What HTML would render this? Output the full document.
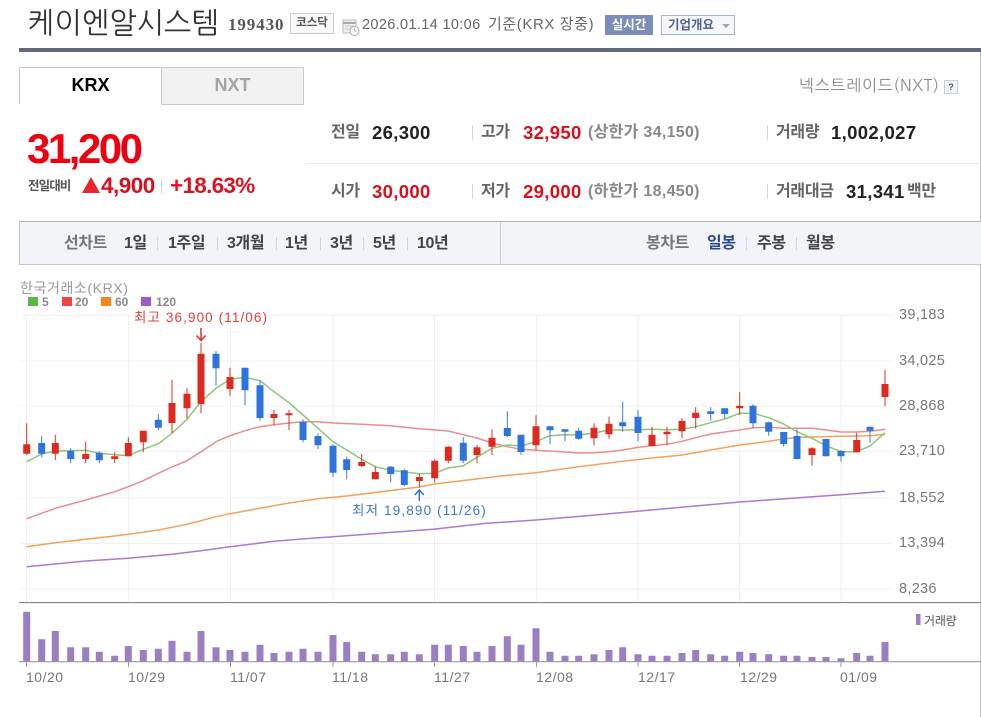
<!DOCTYPE html>
<html lang="ko"><head><meta charset="utf-8"><title>케이엔알시스템</title>
<style>
html,body{margin:0;padding:0;background:#fff;width:981px;height:717px;overflow:hidden}
body{position:relative;font-family:"Liberation Sans","Noto Sans CJK KR",sans-serif;color:#333}
.t{position:absolute;white-space:nowrap;line-height:20px;height:20px;filter:blur(.3px)}
.b{font-weight:700}
.l{font-size:16px;font-weight:700;color:#666;letter-spacing:-.3px}
.v{font-size:18.5px;font-weight:700;color:#222;letter-spacing:.35px}
.r{color:#d9101b}
.g{font-size:16px;font-weight:700;color:#888;letter-spacing:.3px}
.bar{position:absolute;width:1px;background:#d5d5d5}
.x{font-size:14px;color:#777;letter-spacing:.5px}
.y{font-size:14.5px;color:#777;letter-spacing:.3px;left:899px}
.tb{font-size:16px;font-weight:700;color:#444;letter-spacing:-.4px}
.sb{position:absolute;top:237px;width:1px;height:13px;background:#d4d6dc}
svg{position:absolute;left:0;top:0}
</style></head><body>

<div class="t" style="left:27px;top:9px;height:30px;line-height:30px;font-family:'NanumGothic','Noto Sans CJK KR',sans-serif;font-size:29px;letter-spacing:.15px;color:#333">케이엔알시스템</div>
<div class="t b" style="left:228px;top:15px;font-family:'Liberation Serif',serif;font-size:17px;letter-spacing:.9px;color:#555">199430</div>
<div style="position:absolute;left:290px;top:13px;width:42px;height:19px;border:1px solid #ccc;background:#fafafa;text-align:center;font-size:11.5px;line-height:19px;color:#555;font-weight:700">코스닥</div>
<svg width="981" height="40" style="pointer-events:none"><path d="M343 20h13v13h-13z" fill="#eee" stroke="#bbb"/><path d="M343 23h13" stroke="#aaa" stroke-width="2"/><path d="M345 26h9M345 29h5" stroke="#ccc"/><circle cx="354.500" cy="31" r="4.500" fill="#fff" stroke="#aaa"/><path d="M354.500 28.500V31h2" fill="none" stroke="#aaa"/></svg>
<div class="t" style="left:362px;top:15px;font-size:14.5px;color:#666;letter-spacing:.35px">2026.01.14 10:06</div>
<div class="t" style="left:488px;top:15px;font-size:15px;color:#666;letter-spacing:.6px">기준(KRX 장중)</div>
<div style="position:absolute;left:605px;top:15px;width:48px;height:20px;background:#7b8db8;color:#fff;text-align:center;font-size:12.5px;line-height:20px;font-weight:700">실시간</div>
<div style="position:absolute;left:661px;top:15px;width:72px;height:18px;border:1px solid #a5b2d0;background:#f5f7fd;color:#4f6295;font-size:12.5px;line-height:18px;font-weight:700"><span style="position:absolute;left:6px;white-space:nowrap">기업개요</span><span style="position:absolute;left:60px;top:8px;border:4px solid transparent;border-top:4px solid #9aa6c4;border-bottom:0"></span></div>
<div style="position:absolute;left:19px;top:48px;width:962px;height:4px;background:#626a76"></div>
<div style="position:absolute;left:980px;top:52px;width:1px;height:665px;background:#c4c4c4"></div>

<div style="position:absolute;left:19px;top:67px;width:141px;height:36px;border:1px solid #c8c8c8;border-bottom:0;text-align:center;font:700 18px/35px 'Liberation Sans',sans-serif;color:#000;background:#fff">KRX</div>
<div style="position:absolute;left:161px;top:67px;width:141px;height:36px;border:1px solid #c8c8c8;text-align:center;font:700 18px/35px 'Liberation Sans',sans-serif;color:#a5a5a5;background:#f2f2f2">NXT</div>
<div class="t" style="left:799px;top:76px;font-size:16px;color:#888;letter-spacing:.7px;font-family:'NanumGothic','Liberation Sans',sans-serif">넥스트레이드(NXT)</div>
<div style="position:absolute;left:944px;top:80px;width:12px;height:12px;border:1px solid #c6d0d6;background:#eef2f3;text-align:center;font:700 9px/12px 'Liberation Sans',sans-serif;color:#555">?</div>

<div class="t b" style="left:27px;top:128px;height:42px;line-height:42px;font-size:42px;letter-spacing:-2.5px;color:#ee0010">31,200</div>
<div class="t" style="left:28px;top:176px;font-size:12.5px;font-weight:700;color:#555;letter-spacing:-.9px">전일대비</div>
<svg width="981" height="200"><path d="M91 177L100 193H82z" fill="#e8262c"/></svg>
<div class="t b" style="left:101px;top:176px;font-size:22.5px;letter-spacing:-.5px;color:#d9101b">4,900</div>
<div class="bar" style="left:161px;top:179px;height:15px"></div>
<div class="t b" style="left:170px;top:176px;font-size:22.5px;letter-spacing:-.7px;color:#e01020">+18.63%</div>

<div style="position:absolute;left:306px;top:163px;width:675px;height:1px;background:#e6e6e6"></div>

<div class="t l" style="left:331px;top:123px">전일</div><div class="t v" style="left:372px;top:123px">26,300</div>
<div class="bar" style="left:472px;top:125px;height:15px"></div>
<div class="t l" style="left:481px;top:123px">고가</div><div class="t v r" style="left:523px;top:123px">32,950</div>
<div class="t g" style="left:588px;top:123px">(상한가 34,150)</div>
<div class="bar" style="left:767px;top:125px;height:15px"></div>
<div class="t l" style="left:776px;top:123px">거래량</div><div class="t v" style="left:831px;top:123px">1,002,027</div>

<div class="t l" style="left:331px;top:182px">시가</div><div class="t v r" style="left:372px;top:182px">30,000</div>
<div class="bar" style="left:472px;top:184px;height:15px"></div>
<div class="t l" style="left:481px;top:182px">저가</div><div class="t v r" style="left:523px;top:182px">29,000</div>
<div class="t g" style="left:588px;top:182px">(하한가 18,450)</div>
<div class="bar" style="left:767px;top:184px;height:15px"></div>
<div class="t l" style="left:776px;top:182px">거래대금</div><div class="t v" style="left:846px;top:182px">31,341</div>
<div class="t l" style="left:907px;top:182px">백만</div>

<div style="position:absolute;left:19px;top:221px;width:961px;height:42px;background:#f3f4f7;border-top:1px solid #b4b6bd;border-bottom:1px solid #c4c6cc;border-left:1px solid #c4c6cc"></div>
<div style="position:absolute;left:500px;top:222px;width:1px;height:42px;background:#c9cbd1"></div>
<div class="t tb" style="left:64px;top:234px;color:#777">선차트</div>
<div class="t tb" style="left:124px;top:234px">1일</div><div class="sb" style="left:157px"></div>
<div class="t tb" style="left:168px;top:234px">1주일</div><div class="sb" style="left:217px"></div>
<div class="t tb" style="left:227px;top:234px">3개월</div><div class="sb" style="left:276px"></div>
<div class="t tb" style="left:285px;top:234px">1년</div><div class="sb" style="left:320px"></div>
<div class="t tb" style="left:330px;top:234px">3년</div><div class="sb" style="left:363px"></div>
<div class="t tb" style="left:373px;top:234px">5년</div><div class="sb" style="left:407px"></div>
<div class="t tb" style="left:417px;top:234px">10년</div>
<div class="t tb" style="left:646px;top:234px;color:#777">봉차트</div>
<div class="t tb" style="left:707px;top:234px;color:#2c4a8c">일봉</div><div class="sb" style="left:746px"></div>
<div class="t tb" style="left:757px;top:234px">주봉</div><div class="sb" style="left:796px"></div>
<div class="t tb" style="left:806px;top:234px">월봉</div>

<div class="t" style="left:20px;top:278px;font-size:14px;color:#999;letter-spacing:.6px">한국거래소(KRX)</div>

<svg width="981" height="717" style="filter:blur(.35px)">
<rect x="28" y="297" width="10" height="9" fill="#55bb44"/><rect x="62" y="297" width="10" height="9" fill="#ee4444"/><rect x="101" y="297" width="10" height="9" fill="#f5851f"/><rect x="141" y="297" width="10" height="9" fill="#a05cc8"/>
<path d="M19 315.500H893M19 361H893M19 406H893M19 451.500H893M19 498H893M19 543.500H893M19 589H893M26.500 315V603M128.500 315V603M230.500 315V603M333 315V603M434.500 315V603M536.500 315V603M638 315V603M739.500 315V603M841 315V603" stroke="#f0f0f0" fill="none"/>
<path d="M19 602.500H981" stroke="#888"/><path d="M19 603.500H981" stroke="#eee"/>
<g fill="none" stroke-width="1.500" stroke-linejoin="round">
<polyline stroke="#a97ad2" points="26.700,566.700 85.700,561 128.300,558.300 172,554.300 201,550.700 230,546.700 274,541.300 318,537.700 333,536.700 433,529.300 486.700,523.300 536,520 586.700,515.700 640,511 739.700,502 841,494.700 885,491.300"/>
<polyline stroke="#f2a25c" points="26.700,546.700 55.300,542.700 85.700,539.300 114.700,536 128.300,534.300 143.300,532.300 158.300,530 172,527.300 187,524.300 201,520.700 216,516.700 230,513.700 245,511 260,508.300 289,503 318,498.700 346.700,496 419.300,487 434.700,484 507.300,475.300 536,472.700 578.700,466.700 622.700,461.300 652,458 682,455 710.700,450 739.700,445 768.700,441.300 783.700,439 797,437.300 812,437 841,436.300 870,435.700 885,434.300"/>
<polyline stroke="#ea8c8c" points="26.700,518.700 55.300,508.300 85.700,500 114.700,491.700 128.300,486.700 143.300,480.700 158.300,473.300 172,467 187,460.700 201,451.700 216,441.700 230,435.700 245,430.700 260,426.700 274,424.700 289,423 303,421.700 318,421.700 333,423 361.700,424.300 390.700,425.700 419.300,428.700 448.300,431 463.300,434.700 477,438 492,443 507.300,446.700 521,449.300 536,450.300 565,452 578.700,453 594,452.700 609,451.700 622.700,450 638,447.300 652,445.700 667,444.300 682,441.300 695.700,437.700 710.700,434 724.700,432 739.700,430 753,427.700 768.700,427.300 783.700,428.300 797,428.300 812,428.300 826,430 841,432 856.700,432 870,431.300 885,429.300"/>
<polyline stroke="#8cc878" points="26.700,461.700 41.700,454 55.300,451 85.700,450.300 99.300,453.300 114.700,454.700 128.300,455.700 143.300,449.300 158.300,443.700 172,433.300 187,419.300 201,401.700 216,388.300 230,379.300 245,377.300 260,380.700 274,391.700 289,402.700 303,415 318,428.300 333,441.700 346.700,450 361.700,459.300 375.300,466.700 390.700,470.300 404.300,472 419.300,473.700 434.700,473.300 448.300,468 463.300,465.700 477,457.300 492,448.300 507.300,445 521,446 536,441.700 550,435.700 565,434.700 578.700,435 594,433 609,430 622.700,430 638,429.700 652,429.300 667,429.700 682,429.300 695.700,426.700 710.700,422.700 724.700,419 739.700,413.300 753,413.300 768.700,417.700 783.700,424 797,431.700 812,438.300 826,445.700 841,451.700 856.700,451.700 870,446 885,432.700"/>
</g>
<path fill="none" stroke="#dd3025" d="M26.700 423.300V455M55.300 434.700V460M85.700 441.700V463.300M114.700 452.300V463.300M128.300 437.300V456.300M143.300 430.700V452.300M172 379.700V432.700M187 388V418.300M201 343V413.300M230 367.700V395.700M274 410V425.300M289 410V430M361.700 454V467.300M375.300 466.700V479.300M419.300 474V487.300M434.700 459.300V482.300M448.300 446V463.300M477 444.700V463.300M492 429.300V455M536 415.300V450M594 423.300V445.300M609 416.700V438.700M652 426.700V446M667 426.700V445M682 418.300V438.300M695.700 407.300V428.700M739.700 392V415M812 447V465.700M856.700 432.700V452.300M885 370V406"/>
<path fill="none" stroke="#dd2a20" stroke-width="7" d="M26.700 444.300V453.700M55.300 443V453.700M85.700 454V459M114.700 456.300V459M128.300 443V456.300M143.300 430.700V442.300M172 403V423M187 393.700V408.300M201 353.700V404M230 377V389M274 414V418M289 413.300V415.300M361.700 462V466M375.300 472V479.300M419.300 477V481M434.700 460.700V478.300M448.300 446.700V460.700M477 447.300V455M492 437.700V446.700M536 426.300V445.300M594 427.700V438.300M609 423.700V434.300M652 434.700V446M667 431.700V434.300M682 421V431.300M695.700 412.700V418M739.700 405.700V408.300M812 448.300V455M856.700 440V452.300M885 384V397"/>
<path fill="none" stroke="#3a7cdc" d="M41.700 436V457.300M70.700 448.300V463.300M99.300 451.300V463.300M158.300 414V430M216 350.700V386M245 367.700V405.300M260 380V420.700M303 419.300V442.300M318 433.300V449.300M333 444V476.700M346.700 456.700V479.300M390.700 466V482.300M404.300 469V486.300M463.300 437.300V463.300M507.300 411.300V437.300M521 434.700V455M550 426.300V444M565 429.300V441.300M578.700 427.700V440M622.700 401.700V431.700M638 410V441.300M710.700 407.300V420.700M724.700 408.300V418.300M753 404.300V428.300M768.700 421.700V435.700M783.700 431.700V446.700M797 429.300V459.300M826 438.700V456.300M841 450V461.700M870 426.700V442.700"/>
<path fill="none" stroke="#2f74dc" stroke-width="7" d="M41.700 443V453.700M70.700 451V459M99.300 452.700V460.300M158.300 419.700V427.700M216 353.700V368.300M245 367.700V390.300M260 385.300V418M303 422V440M318 436V445.300M333 445.700V472.700M346.700 459.300V470M390.700 466.700V474M404.300 470.300V485M463.300 442.700V460.700M507.300 428V436M521 434.700V452M550 426.300V430.300M565 429.300V431.700M578.700 430.700V438.700M622.700 422.300V426.300M638 416.700V433M710.700 411.300V414M724.700 408.300V414M753 405.700V423.300M768.700 422.300V431.700M783.700 432V444M797 436V459M826 439V456.300M841 451V456.300M870 426.700V430.700"/>
<path fill="none" stroke="#dd3025" stroke-width="1.500" d="M201 328V340M196.500 335.500L201 340.500L205.500 335.500"/>
<path fill="none" stroke="#2f74dc" stroke-width="1.500" d="M419.300 501V490M414.800 495L419.300 490L423.800 495"/>
<path fill="none" stroke="#9a7fc2" stroke-width="7" d="M26.700 661.700V611.700M41.700 661.700V639.300M55.300 661.700V631M70.700 661.700V647.300M85.700 661.700V647.300M99.300 661.700V651.700M114.700 661.700V655.700M128.300 661.700V646M143.300 661.700V650M158.300 661.700V648.700M172 661.700V640.700M187 661.700V651.700M201 661.700V631M216 661.700V647.300M230 661.700V650M245 661.700V651.700M260 661.700V644.700M274 661.700V653M289 661.700V651.700M303 661.700V648.700M318 661.700V651.700M333 661.700V635M346.700 661.700V642M361.700 661.700V651.700M375.300 661.700V654.300M390.700 661.700V654.300M404.300 661.700V651.700M419.300 661.700V654.300M434.700 661.700V644.700M448.300 661.700V644.700M463.300 661.700V646M477 661.700V651.700M492 661.700V646M507.300 661.700V636.300M521 661.700V644.700M536 661.700V628.300M550 661.700V651.700M565 661.700V655.700M578.700 661.700V655.700M594 661.700V654.300M609 661.700V650M622.700 661.700V647.300M638 661.700V654.300M652 661.700V655.700M667 661.700V655.700M682 661.700V653M695.700 661.700V650M710.700 661.700V654.300M724.700 661.700V655.700M739.700 661.700V651.700M753 661.700V653M768.700 661.700V654.300M783.700 661.700V655.700M797 661.700V655.700M812 661.700V657M826 661.700V657M841 661.700V658.300M856.700 661.700V653M870 661.700V655.700M885 661.700V642"/>
<path d="M19 661.700H981" stroke="#999" stroke-width="1.200"/>
<path d="M26.500 662V667M128.500 662V667M230.500 662V667M333 662V667M434.500 662V667M536.500 662V667M638 662V667M739.500 662V667M841 662V667" stroke="#999"/>
<rect x="916" y="614" width="4.500" height="11" fill="#9a7fc2"/>
</svg>

<div class="t" style="left:42px;top:292px;font-size:12px;font-weight:700;color:#888">5</div>
<div class="t" style="left:75px;top:292px;font-size:12px;font-weight:700;color:#888">20</div>
<div class="t" style="left:115px;top:292px;font-size:12px;font-weight:700;color:#888">60</div>
<div class="t" style="left:156px;top:292px;font-size:12px;font-weight:700;color:#888">120</div>
<div class="t" style="left:134px;top:308px;font-size:13.5px;color:#e2403a;letter-spacing:1.1px">최고 36,900 (11/06)</div>
<div class="t" style="left:352px;top:501px;font-size:13.5px;color:#3d78c9;letter-spacing:1.15px">최저 19,890 (11/26)</div>

<div class="t y" style="top:305px">39,183</div>
<div class="t y" style="top:351px">34,025</div>
<div class="t y" style="top:396px">28,868</div>
<div class="t y" style="top:441px">23,710</div>
<div class="t y" style="top:488px">18,552</div>
<div class="t y" style="top:533px">13,394</div>
<div class="t y" style="top:579px">8,236</div>

<div class="t x" style="left:26px;top:667px">10/20</div>
<div class="t x" style="left:128px;top:667px">10/29</div>
<div class="t x" style="left:230px;top:667px">11/07</div>
<div class="t x" style="left:332px;top:667px">11/18</div>
<div class="t x" style="left:434px;top:667px">11/27</div>
<div class="t x" style="left:536px;top:667px">12/08</div>
<div class="t x" style="left:638px;top:667px">12/17</div>
<div class="t x" style="left:740px;top:667px">12/29</div>
<div class="t x" style="left:840px;top:667px">01/09</div>
<div class="t" style="left:924px;top:611px;font-size:12px;color:#555;letter-spacing:-.2px">거래량</div>
</body></html>
